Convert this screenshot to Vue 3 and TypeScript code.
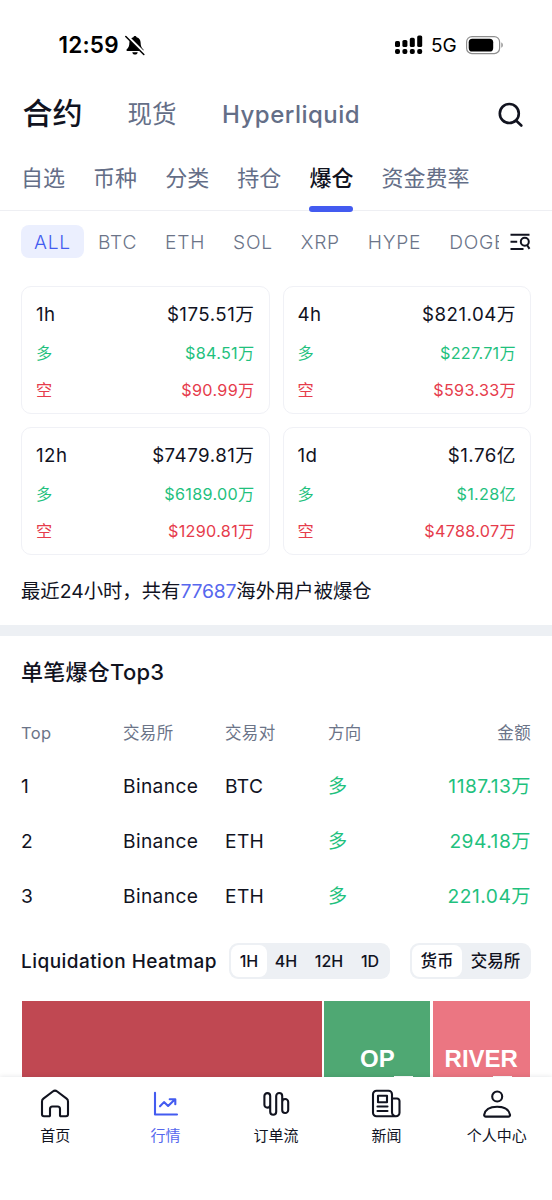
<script setup lang="ts">
interface Period {
  label: string
  total: string
  long: string
  short: string
}
interface Order {
  rank: number
  exchange: string
  pair: string
  side: string
  amount: string
}

const markets = [
  { name: '现货', cls: 'cjk' },
  { name: 'Hyperliquid', cls: 'latin' },
]
const tabs = ['自选', '币种', '分类', '持仓', '爆仓', '资金费率']
const activeTab = '爆仓'
const coins = ['BTC', 'ETH', 'SOL', 'XRP', 'HYPE', 'DOGE']
const periods: Period[] = [
  { label: '1h', total: '$175.51万', long: '$84.51万', short: '$90.99万' },
  { label: '4h', total: '$821.04万', long: '$227.71万', short: '$593.33万' },
  { label: '12h', total: '$7479.81万', long: '$6189.00万', short: '$1290.81万' },
  { label: '1d', total: '$1.76亿', long: '$1.28亿', short: '$4788.07万' },
]
const orders: Order[] = [
  { rank: 1, exchange: 'Binance', pair: 'BTC', side: '多', amount: '1187.13万' },
  { rank: 2, exchange: 'Binance', pair: 'ETH', side: '多', amount: '294.18万' },
  { rank: 3, exchange: 'Binance', pair: 'ETH', side: '多', amount: '221.04万' },
]
const ranges = ['1H', '4H', '12H', '1D']
</script>

<template>
  <div class="screen">
    <header class="status">
      <span class="time">12:59</span>
      <svg class="bell" width="20" height="21" viewBox="0 0 20 21">
        <path d="M10 1c-.9 0-1.500.6-1.600 1.300C5.700 3 4.500 5 4.400 7.500c-.1 3.500-.7 5-2.600 6.700-.7.700-.4 1.700.5 1.700h15.400c.9 0 1.200-1 .5-1.700-1.900-1.700-2.500-3.200-2.600-6.700-.1-2.500-1.300-4.500-4-5.200C11.500 1.600 10.900 1 10 1z" />
        <path d="M7.300 17.200h5.400c-.2 1.500-1.200 2.400-2.700 2.400s-2.500-.9-2.700-2.400z" />
        <path d="M1.600 0.700l18 18" stroke="#fff" stroke-width="3" />
        <path d="M0.800 1.500l18 18" stroke="#000" stroke-width="1.500" stroke-linecap="round" />
      </svg>
      <svg class="signal" width="28" height="20" viewBox="0 0 28 20">
        <rect x="0" y="6" width="5" height="6" rx="1.600" />
        <rect x="7.400" y="5" width="5" height="7" rx="1.600" />
        <rect x="14.800" y="2.800" width="5" height="9.200" rx="1.600" />
        <rect x="22.200" y="0.400" width="5" height="11.600" rx="1.600" />
        <rect v-for="i in 4" :key="i" :x="(i - 1) * 7.4" y="14" width="5" height="5" rx="1.900" />
      </svg>
      <span class="network">5G</span>
      <svg class="battery" width="38" height="19" viewBox="0 0 38 19">
        <rect x="0.600" y="0.600" width="33" height="17" rx="5.400" fill="none" stroke="#8e8e8e" stroke-width="1.200" />
        <rect x="2.700" y="2.700" width="24.500" height="12.800" rx="3.600" />
        <path d="M35.300 6.500c2 .6 2 4.600 0 5.200z" fill="#8e8e8e" />
      </svg>
    </header>

    <nav class="markets">
      <strong class="current">合约</strong>
      <span v-for="m in markets" :key="m.name" :class="m.cls">{{ m.name }}</span>
      <svg class="search" width="26" height="26" viewBox="0 0 26 26">
        <circle cx="11.300" cy="12.500" r="9.500" />
        <path d="M18.300 19.800L23.300 24.500" />
      </svg>
    </nav>

    <nav class="tabs">
      <span v-for="t in tabs" :key="t" class="tab" :class="{ on: t === activeTab }">{{ t }}</span>
    </nav>

    <div class="chips">
      <span class="chip-all">ALL</span>
      <div class="coins">
        <span v-for="c in coins" :key="c">{{ c }}</span>
      </div>
      <svg class="filter" width="21" height="18" viewBox="0 0 21 18">
        <path d="M0.500 1.700H19.500M0.500 8.700H7.200M0.500 15.900H13.500" />
        <circle cx="14.800" cy="8.800" r="4" />
        <path d="M17 12L19.500 15.900" />
      </svg>
    </div>

    <section class="cards">
      <article v-for="p in periods" :key="p.label" class="card">
        <div class="line main"><span>{{ p.label }}</span><span>{{ p.total }}</span></div>
        <div class="line up"><span>多</span><span>{{ p.long }}</span></div>
        <div class="line down"><span>空</span><span>{{ p.short }}</span></div>
      </article>
    </section>

    <p class="summary">最近24小时，共有<em>77687</em>海外用户被爆仓</p>
    <div class="band"></div>

    <h2 class="title">单笔爆仓Top3</h2>
    <div class="row head">
      <span>Top</span><span>交易所</span><span>交易对</span><span>方向</span><span class="end">金额</span>
    </div>
    <div v-for="o in orders" :key="o.rank" class="row">
      <span>{{ o.rank }}</span><span>{{ o.exchange }}</span><span>{{ o.pair }}</span>
      <span class="green">{{ o.side }}</span><span class="end green">{{ o.amount }}</span>
    </div>

    <div class="heat-head">
      <h3>Liquidation Heatmap</h3>
      <div class="seg ranges">
        <span v-for="r in ranges" :key="r" :class="['r' + r.toLowerCase(), { sel: r === '1H' }]">{{ r }}</span>
      </div>
      <div class="seg kinds"><span class="sel">货币</span><span>交易所</span></div>
    </div>
    <div class="heat">
      <div class="tile main-tile"></div>
      <div class="tile op"><b>OP</b><i></i></div>
      <div class="tile river"><b>RIVER</b><i></i></div>
    </div>

    <footer class="bottom">
      <div class="item">
        <svg width="30" height="30" viewBox="0 0 30 30">
          <path d="M4 27.300h5.200a.8.800 0 0 0 .8-.8V20a2.500 2.500 0 0 1 2.500-2.500h5A2.500 2.500 0 0 1 20 20v6.500a.8.800 0 0 0 .8.800H26a2 2 0 0 0 2-2V12.500a3.500 3.500 0 0 0-1.400-2.800l-9.400-7.200a3.600 3.600 0 0 0-4.400 0L3.400 9.700A3.500 3.500 0 0 0 2 12.500v12.800a2 2 0 0 0 2 2z" />
        </svg>
        <span>首页</span>
      </div>
      <div class="item active">
        <svg width="30" height="30" viewBox="0 0 30 30">
          <path d="M4 3.700V25.500H26M9 17.300l4-4.200 4.100 3.900 6.700-6.500M18.700 10.200h5.600v5" />
        </svg>
        <span>行情</span>
      </div>
      <div class="item">
        <svg width="30" height="30" viewBox="0 0 30 30">
          <path d="M9.200 15.700a2.900 2.900 0 0 1-5.800 0V7a2.900 2.900 0 0 1 5.800 0V22.800a3 3 0 0 0 6 0V7a3 3 0 0 1 6 0v14a3 3 0 0 0 6 0v-8a3 3 0 0 0-6 0" />
        </svg>
        <span>订单流</span>
      </div>
      <div class="item">
        <svg width="30" height="30" viewBox="0 0 30 30">
          <path d="M25 27.300H5.500A3.500 3.500 0 0 1 2 23.800V5.200A3.500 3.500 0 0 1 5.500 1.700h12A3.500 3.500 0 0 1 21 5.200v18a4 4 0 0 0 4 4.100 3.500 3.500 0 0 0 3.500-3.500V12a2.500 2.500 0 0 0-2.500-2.500h-5M7 6.800h9v6.400H7zM6.500 17.500h10M6.500 22h10" />
        </svg>
        <span>新闻</span>
      </div>
      <div class="item">
        <svg width="30" height="30" viewBox="0 0 30 30">
          <circle cx="15.200" cy="7.500" r="5" />
          <path d="M3.800 27.600h22.600c1 0 1.800-.8 1.600-1.800C27 20.600 22 17.800 15.100 17.800S3.200 20.600 2.200 25.800C2 26.800 2.800 27.600 3.800 27.600z" />
        </svg>
        <span>个人中心</span>
      </div>
    </footer>
  </div>
</template>

<style>
body {
  background: #fff;
}
</style>

<style scoped>
.screen {
  width: 552px;
  height: 1200px;
  overflow: hidden;
  display: flex;
  flex-direction: column;
  background: #fff;
  color: #11131f;
  font-family: Inter, 'Noto Sans CJK SC', sans-serif;
  white-space: nowrap;
}
.screen > * {
  flex-shrink: 0;
}
svg {
  flex-shrink: 0;
}
.status {
  height: 90px;
  box-sizing: border-box;
  padding: 0 48px 0 58.500px;
  display: flex;
  align-items: center;
  color: #000;
}
.time {
  width: 66.500px;
  font-size: 22.500px;
  line-height: 26px;
  margin-top: -1px;
  font-weight: 600;
  letter-spacing: 0.2px;
}
.signal {
  margin-left: 250px;
}
.network {
  width: 35px;
  margin-left: 8px;
  font-size: 19px;
  font-weight: 400;
}
.markets {
  height: 48px;
  display: flex;
  align-items: center;
  padding: 0 28.500px 0 22.500px;
  color: #646e87;
}
.current {
  width: 105px;
  font-size: 30px;
  line-height: 46px;
  font-weight: 500;
  margin-top: -2px;
  color: #11131f;
}
.cjk {
  width: 94.500px;
  font-size: 24.500px;
  line-height: 36px;
  margin-top: -1px;
}
.latin {
  font-size: 24px;
  font-weight: 450;
  letter-spacing: 0.500px;
}
.search {
  margin-left: auto;
  fill: none;
  stroke: #11131f;
  stroke-width: 2.600;
  stroke-linecap: round;
}
.tabs {
  height: 73px;
  box-sizing: border-box;
  border-bottom: 1px solid #eeeff3;
  display: flex;
  gap: 28.100px;
  padding: 0 21px;
}
.tab {
  position: relative;
  height: 77px;
  line-height: 80px;
  font-size: 22px;
  color: #646e87;
}
.tab.on {
  color: #11131f;
  font-weight: 500;
}
.tab.on::after {
  content: '';
  position: absolute;
  left: 0;
  right: 0;
  top: 68px;
  height: 5.500px;
  border-radius: 3px;
  background: #435bf0;
}
.chips {
  height: 33px;
  margin-top: 14px;
  padding: 0 21px;
  display: flex;
  align-items: center;
  font-size: 19.200px;
  font-weight: 350;
  letter-spacing: 0.750px;
  color: #6b7488;
}
.chip-all {
  width: 63px;
  height: 33px;
  line-height: 34px;
  border-radius: 8px;
  background: #ebeffe;
  color: #435bf0;
  text-align: center;
}
.coins {
  width: 401px;
  margin-left: 14px;
  line-height: 34px;
  overflow: hidden;
  display: flex;
  gap: 27.900px;
}
.filter {
  margin-left: auto;
  fill: none;
  stroke: #11131f;
  stroke-width: 2;
}
.cards {
  margin: 28px 21px 0;
  display: grid;
  grid-template-columns: 1fr 1fr;
  gap: 13px;
}
.card {
  height: 128.200px;
  box-sizing: border-box;
  border: 1.500px solid #f0f1f6;
  border-radius: 10px;
  padding: 9px 14px 0;
}
.line {
  height: 37px;
  line-height: 38px;
  display: flex;
  justify-content: space-between;
  font-size: 16.200px;
  letter-spacing: 0.300px;
}
.line.main {
  height: 38px;
  line-height: 37px;
  font-size: 18.700px;
  letter-spacing: 0.500px;
}
.up,
.green {
  color: #1fc17e;
}
.down {
  color: #e63c4c;
}
.summary {
  height: 70px;
  line-height: 72px;
  margin: 0 21px;
  font-size: 19.350px;
}
.summary em {
  font-style: normal;
  letter-spacing: -0.200px;
  color: #5667ee;
}
.band {
  height: 11px;
  background: #edf0f4;
}
.title {
  height: 72px;
  line-height: 72px;
  margin: 0 21px;
  font-size: 22px;
  font-weight: 500;
  letter-spacing: 0.250px;
}
.row {
  height: 55px;
  line-height: 56px;
  margin: 0 21px;
  display: grid;
  grid-template-columns: 102px 102px 103px 1fr 1fr;
  font-size: 19.200px;
  letter-spacing: 0.350px;
}
.row.head {
  height: 50px;
  line-height: 50px;
  font-size: 16.500px;
  color: #6b7488;
}
.end {
  text-align: right;
}
.end.green {
  letter-spacing: 0.500px;
}
.heat-head {
  height: 36px;
  margin: 20px 21px 0;
  display: flex;
  align-items: center;
}
.heat-head h3 {
  width: 208px;
  margin: 0;
  font-size: 19px;
  font-weight: 450;
  letter-spacing: 0.450px;
}
.seg {
  height: 36px;
  box-sizing: border-box;
  padding: 2px;
  border-radius: 9px;
  background: #edf0f4;
  display: flex;
  font-size: 16px;
  font-weight: 450;
  line-height: 32px;
  text-align: center;
}
.ranges {
  width: 161px;
}
.kinds {
  width: 121px;
  margin-left: auto;
  font-size: 16.500px;
  font-weight: 500;
}
.sel {
  background: #fff;
  border-radius: 8px;
}
.r1h {
  width: 36px;
}
.r4h {
  width: 38px;
}
.r12h {
  width: 48px;
}
.r1d {
  width: 34px;
}
.kinds span {
  width: 67px;
}
.kinds .sel {
  width: 50px;
}
.heat {
  height: 76px;
  margin: 22px 22px 0;
  display: grid;
  grid-template-columns: 300px 106px 97px;
  column-gap: 2.400px;
}
.tile {
  position: relative;
  display: flex;
  align-items: flex-end;
  justify-content: center;
  color: #fff;
  font-family: 'Liberation Sans', Arial, sans-serif;
  font-size: 24px;
}
.tile b {
  line-height: 37px;
}
.tile i {
  position: absolute;
  bottom: 0;
  width: 19px;
  height: 1px;
  background: #fff;
}
.main-tile {
  background: #c04852;
}
.op {
  background: #4fa873;
}
.op i {
  left: 70px;
}
.river {
  background: #eb7682;
}
.river i {
  left: 60px;
}
.bottom {
  height: 123px;
  position: relative;
  background: #fff;
  box-shadow: 0 0 5px rgba(20, 25, 45, 0.12);
  display: grid;
  grid-template-columns: repeat(5, 1fr);
}
.item {
  display: flex;
  flex-direction: column;
  align-items: center;
  padding-top: 12px;
  font-size: 15px;
}
.item svg {
  fill: none;
  stroke: #11131f;
  stroke-width: 2.100;
  stroke-linecap: round;
  stroke-linejoin: round;
}
.item span {
  line-height: 22px;
  margin-top: 6px;
}
.active {
  color: #5667ee;
}
.active svg {
  stroke: #435bf0;
}
</style>
